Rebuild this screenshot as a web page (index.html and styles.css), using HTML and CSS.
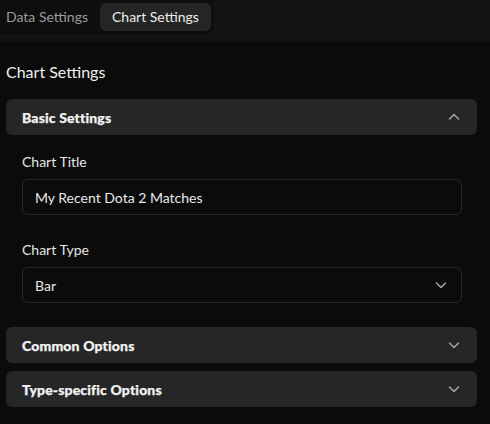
FILE: index.html
```html
<!DOCTYPE html>
<html>
<head>
<meta charset="utf-8">
<link rel="stylesheet" href="styles.css">
</head>
<body>
<div class="topbar">
  <div class="tablist">
    <div class="tab">Data Settings</div>
    <div class="tab active">Chart Settings</div>
  </div>
</div>
<div class="content">
  <h2 class="heading">Chart Settings</h2>
  <div class="accordion">
    <div class="acc-head">
      <span>Basic Settings</span>
      <svg class="chev" width="16" height="16" viewBox="0 0 16 16"><path d="M3.5 10 L8 5.5 L12.5 10" fill="none" stroke="#a0a0a0" stroke-width="1.6" stroke-linecap="round" stroke-linejoin="round"/></svg>
    </div>
    <div class="acc-body">
      <label class="label">Chart Title</label>
      <div class="field">My Recent Dota 2 Matches</div>
      <label class="label second">Chart Type</label>
      <div class="field select">
        <span>Bar</span>
        <svg class="chev" width="16" height="16" viewBox="0 0 16 16"><path d="M3.5 6 L8 10.5 L12.5 6" fill="none" stroke="#a0a0a0" stroke-width="1.6" stroke-linecap="round" stroke-linejoin="round"/></svg>
      </div>
    </div>
  </div>
  <div class="accordion">
    <div class="acc-head">
      <span>Common Options</span>
      <svg class="chev" width="16" height="16" viewBox="0 0 16 16"><path d="M3.5 6 L8 10.5 L12.5 6" fill="none" stroke="#a0a0a0" stroke-width="1.6" stroke-linecap="round" stroke-linejoin="round"/></svg>
    </div>
  </div>
  <div class="accordion">
    <div class="acc-head">
      <span>Type-specific Options</span>
      <svg class="chev" width="16" height="16" viewBox="0 0 16 16"><path d="M3.5 6 L8 10.5 L12.5 6" fill="none" stroke="#a0a0a0" stroke-width="1.6" stroke-linecap="round" stroke-linejoin="round"/></svg>
    </div>
  </div>
</div>
</body>
</html>
```
FILE: styles.css
```css
* { box-sizing: border-box; }
html, body {
  margin: 0;
  padding: 0;
  background: #0b0b0b;
  font-family: Lato, "Noto Sans", sans-serif;
  color: #ececec;
  overflow: hidden;
}
.topbar {
  height: 42px;
  background: #131313;
  display: flex;
  align-items: flex-start;
}
.tablist {
  display: flex;
  padding: 3px;
  margin-left: -9px;
  background: #0e0e0e;
  border-radius: 0 0 8px 0;
}
.tab {
  height: 28px;
  line-height: 28px;
  padding: 0 12px;
  font-size: 14px;
  color: #9a9a9a;
  border-radius: 6px;
}
.tab.active {
  background: #252525;
  color: #ececec;
}
.content {
  padding: 18px 13px 0 6px;
}
.heading {
  margin: 0 0 15px 0;
  font-size: 16px;
  font-weight: 400;
  line-height: 24px;
  color: #f0f0f0;
}
.accordion {
  margin-bottom: 8px;
}
.acc-head {
  height: 36px;
  background: #262626;
  border-radius: 6px;
  display: flex;
  align-items: center;
  justify-content: space-between;
  padding: 0 15px 0 16px;
  font-size: 14px;
  font-weight: 900;
  letter-spacing: 0.15px;
  -webkit-text-stroke: 0.25px #f2f2f2;
  color: #f2f2f2;
}
.acc-body {
  padding: 17px 15px 16px 16px;
}
.label {
  display: block;
  font-size: 14px;
  line-height: 20px;
  color: #e6e6e6;
  margin-bottom: 7px;
}
.label.second {
  margin-top: 25px;
}
.field {
  height: 36px;
  border: 1px solid #2a2a2a;
  border-radius: 6px;
  padding: 0 12px;
  display: flex;
  align-items: center;
  font-size: 14px;
  color: #e8e8e8;
}
.select {
  justify-content: space-between;
}
.chev { display: block; }
```
